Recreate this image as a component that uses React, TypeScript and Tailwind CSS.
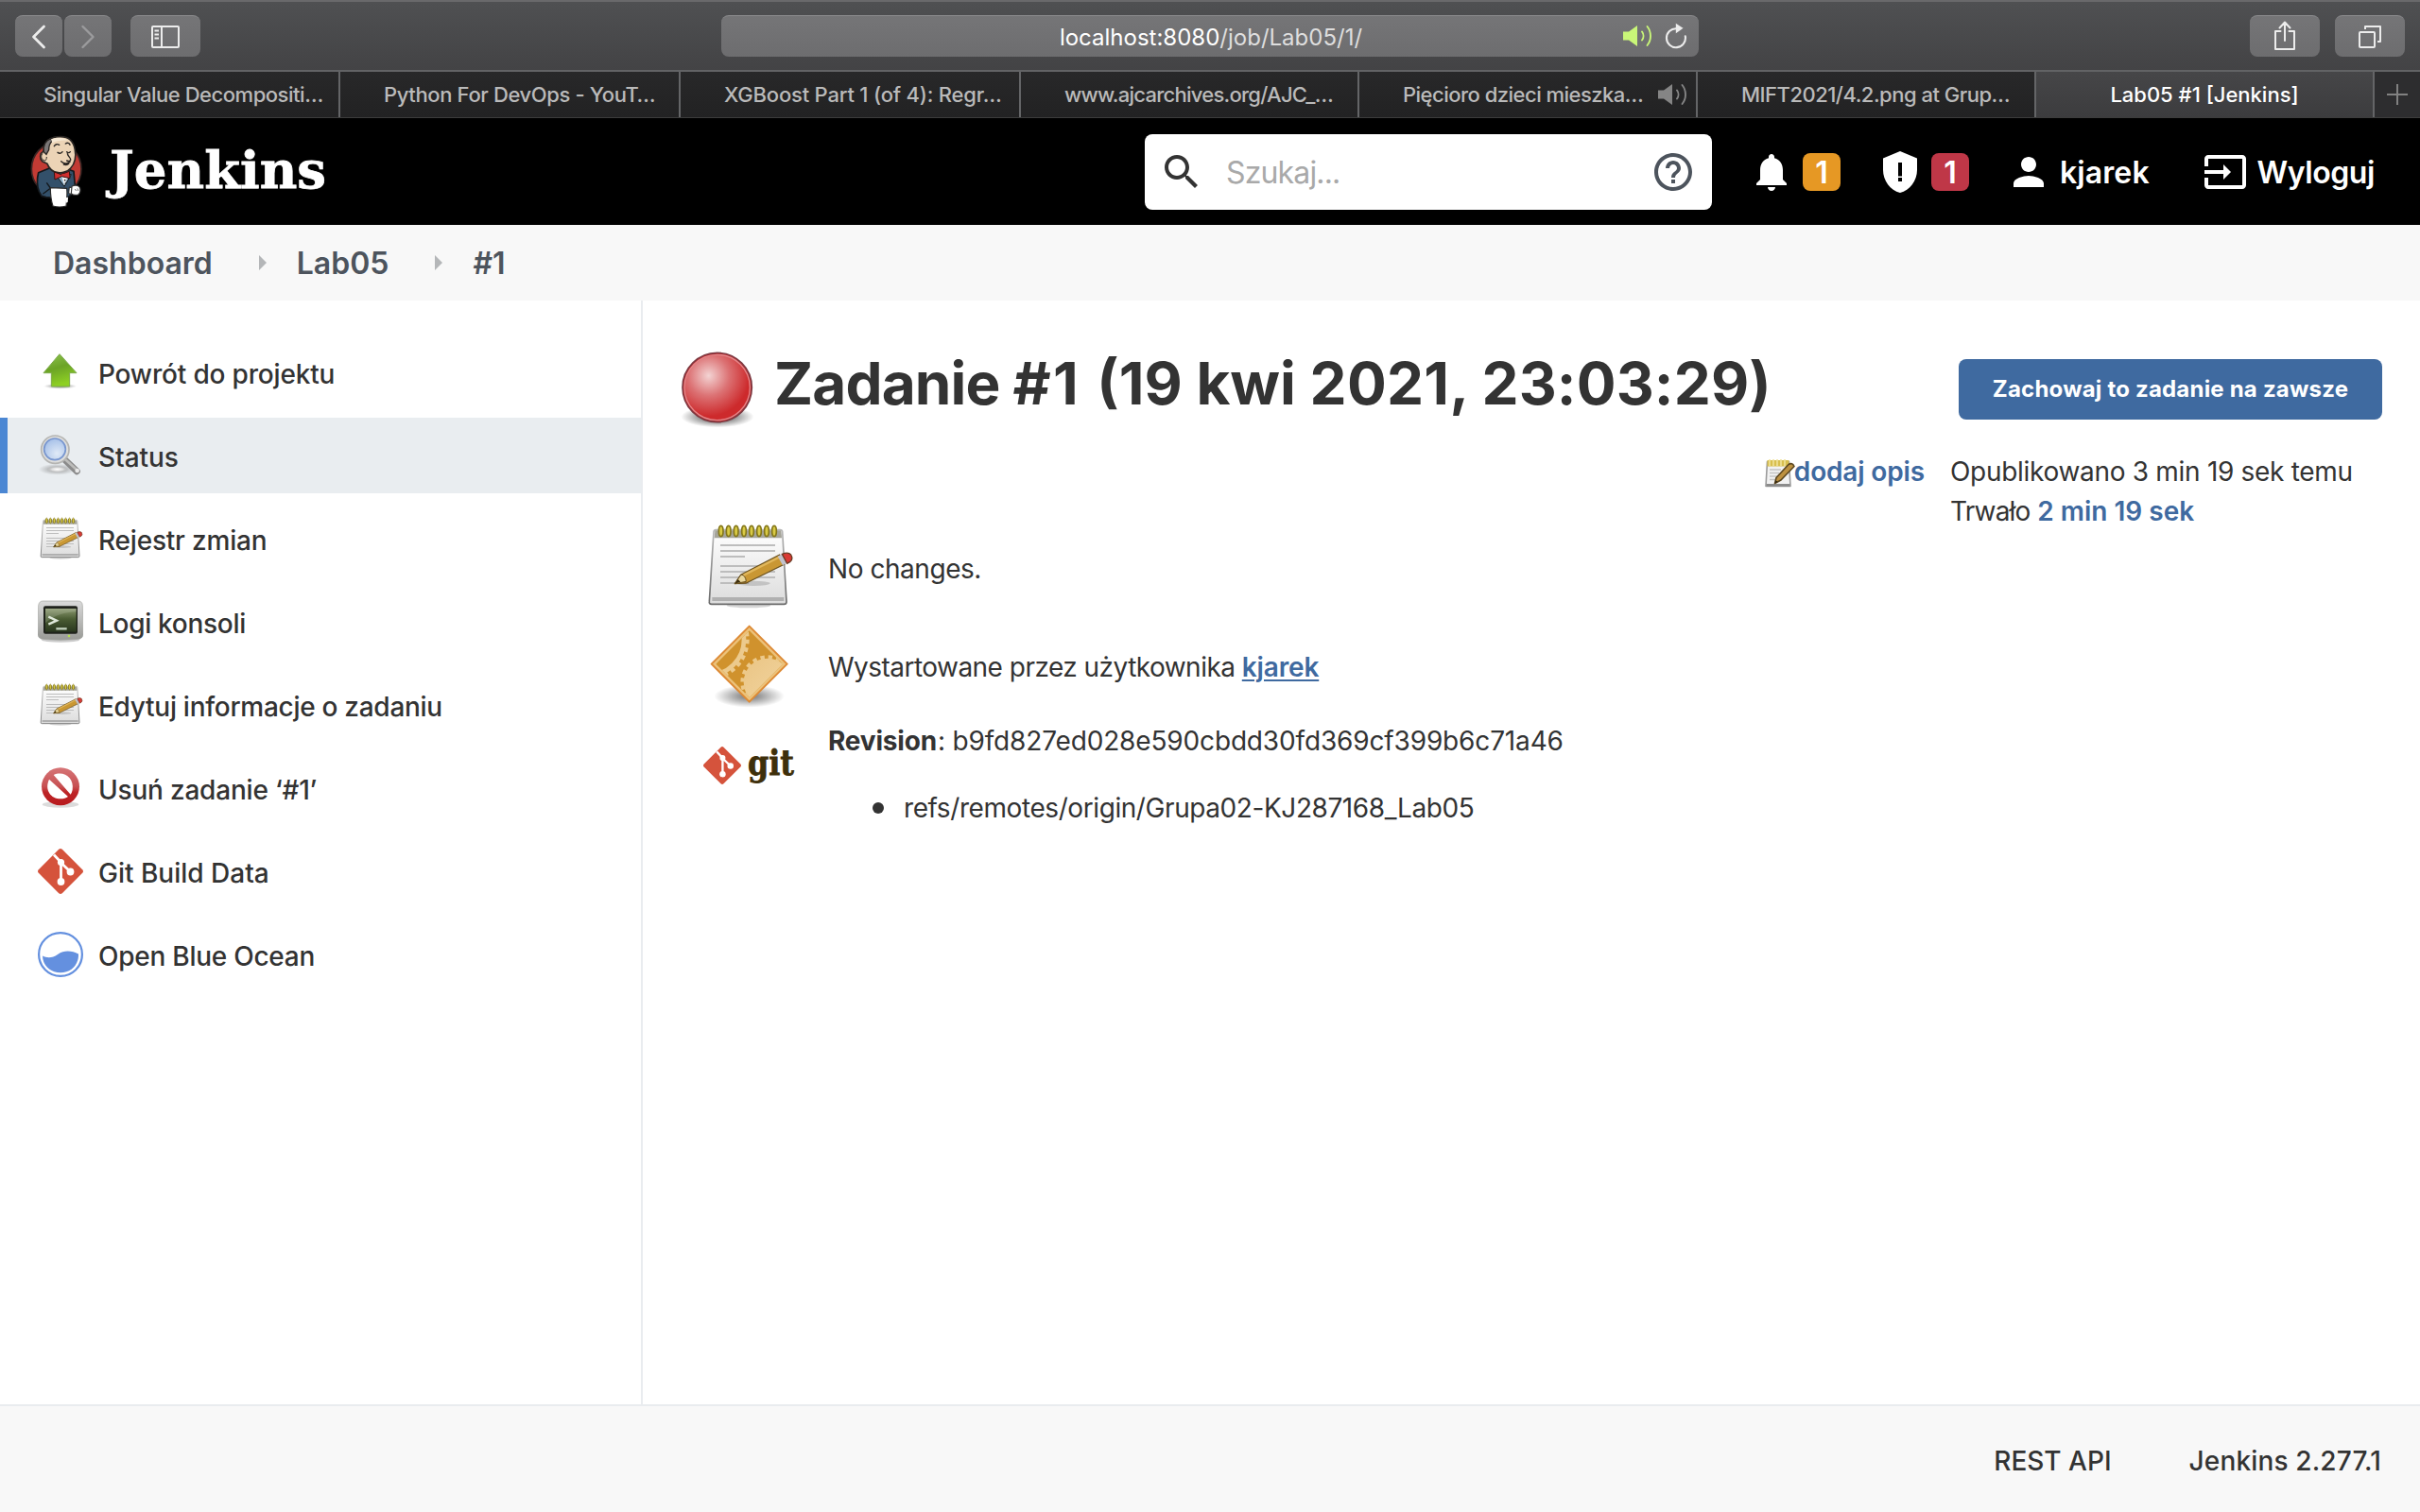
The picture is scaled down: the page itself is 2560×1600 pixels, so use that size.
import type { ReactNode } from 'react';

/* ---------- Browser chrome ---------- */

function Speaker({ className }: { className: string }) {
  return (
    <svg viewBox="0 0 34 26" className={className}>
      <path d="M1 8.500h6L16 2v22l-9-6.500H1z" fill="currentColor" />
      <path d="M21 8.500c2 2.600 2 6.400 0 9M26.500 3c4.700 5.800 4.700 14.200 0 20" fill="none" stroke="currentColor" strokeWidth="1.900" strokeLinecap="round" />
    </svg>
  );
}

const chromeButton =
  'flex h-[44px] shrink-0 items-center justify-center rounded-[8px] border-t border-[#8a8a8c] bg-linear-to-b from-[#757577] to-[#6d6d6f] text-[#ececec]';

function Toolbar() {
  return (
    <div className="flex h-[76px] shrink-0 items-center border-t-[2px] border-b-[2px] border-t-[#69696b] border-b-[#626365] bg-linear-to-b from-[#4f5052] to-[#434345] pl-4 pr-4">
      <div className={`${chromeButton} w-[50px]`}>
        <svg viewBox="0 0 50 44" className="h-[44px] w-[50px]">
          <path d="M30.500 11 19.500 22.000 30.500 33" fill="none" stroke="currentColor" strokeWidth="2.800" strokeLinecap="round" strokeLinejoin="round" />
        </svg>
      </div>
      <div className={`${chromeButton} ml-[2px] w-[50px]`}>
        <svg viewBox="0 0 50 44" className="h-[44px] w-[50px] text-[#9b9b9d]">
          <path d="M19.500 11 30.500 22 19.500 33" fill="none" stroke="currentColor" strokeWidth="2.400" strokeLinecap="round" strokeLinejoin="round" />
        </svg>
      </div>
      <div className={`${chromeButton} ml-[20px] w-[74px]`}>
        <svg viewBox="0 0 32 26" className="h-[26px] w-[32px]" fill="none" stroke="currentColor" strokeWidth="2">
          <rect x="2" y="2" width="28" height="22" rx="1" />
          <path d="M12 2v22M4.500 6.500H9M4.500 10.500H9M4.500 14.500H9" />
        </svg>
      </div>

      <div className={`${chromeButton} relative ml-[551px] w-[1034px]`}>
        <span className="ml-[2px] pt-[2px] text-[24px] leading-none text-[#dedede]">
          <span className="text-white">localhost:8080</span>/job/Lab05/1/
        </span>
        <div className="absolute right-[12px] top-0 flex h-[42px] items-center gap-[11px]">
          <Speaker className="h-[26px] w-[34px] text-[#c9f678]" />
          <svg viewBox="0 0 24 28" className="h-[28px] w-[24px]">
            <path d="M12.500 6.200a10 10 0 1 0 9.300 8.200" fill="none" stroke="currentColor" strokeWidth="2.100" strokeLinecap="round" />
            <path d="M11.800.8v10.400l7.800-5.400z" fill="currentColor" />
          </svg>
        </div>
      </div>

      <div className={`${chromeButton} ml-auto w-[74px]`}>
        <svg viewBox="0 0 26 34" className="mb-[2px] h-[34px] w-[26px]" fill="none" stroke="currentColor" strokeWidth="2">
          <path d="M8.500 12H3v19h20V12h-5.500M13 22V3M7.500 8.500 13 2.500l5.500 6" strokeLinejoin="round" strokeLinecap="round" />
        </svg>
      </div>
      <div className={`${chromeButton} ml-[16px] w-[74px]`}>
        <svg viewBox="0 0 28 28" className="h-[28px] w-[28px]" fill="none" stroke="currentColor" strokeWidth="2" strokeLinejoin="round">
          <rect x="3" y="9" width="16" height="16" rx="1" />
          <path d="M9 6V3h16v16h-3" />
        </svg>
      </div>
    </div>
  );
}

const tabs: { title: string; width: string; tracking: string; sound?: boolean }[] = [
  { title: 'Singular Value Decompositi…', width: 'w-[360px]', tracking: 'tracking-[-0.47px]' },
  { title: 'Python For DevOps - YouT…', width: 'w-[360px]', tracking: 'tracking-[-0.38px]' },
  { title: 'XGBoost Part 1 (of 4): Regr…', width: 'w-[360px]', tracking: 'tracking-[-0.2px]' },
  { title: 'www.ajcarchives.org/AJC_…', width: 'w-[358px]', tracking: 'tracking-[-0.75px]' },
  { title: 'Pięcioro dzieci mieszka…', width: 'w-[358px]', tracking: 'tracking-[-0.52px]', sound: true },
  { title: 'MIFT2021/4.2.png at Grup…', width: 'w-[358px]', tracking: 'tracking-[-0.5px]' },
];

function TabBar() {
  return (
    <div className="flex h-[49px] shrink-0 border-b border-[#3c3c3c] bg-linear-to-b from-[#282829] to-[#222223] text-[22px] font-medium leading-none text-[#bababa]">
      {tabs.map((tab) => (
        <div key={tab.title} className={`${tab.width} flex shrink-0 items-center border-r-[2px] border-[#646567] pl-[46px]`}>
          <span className={`${tab.tracking} whitespace-nowrap`}>{tab.title}</span>
          {tab.sound && <Speaker className="ml-auto mr-[7px] h-[26px] w-[34px] shrink-0 text-[#858585]" />}
        </div>
      ))}
      <div className="flex w-[358px] items-center justify-center border-r-[2px] border-[#646567] bg-linear-to-b from-[#464648] to-[#3c3c3e] text-white">
        Lab05 #1 [Jenkins]
      </div>
      <div className="flex flex-1 items-center justify-center bg-[#2d2d2f]">
        <svg viewBox="0 0 24 24" className="h-6 w-6">
          <path d="M12 1v22M1 12h22" stroke="#818181" strokeWidth="2" />
        </svg>
      </div>
    </div>
  );
}

/* ---------- Jenkins header ---------- */

function Butler() {
  return (
    <svg viewBox="0 0 270 300" className="mb-[3px] h-[100px] w-[90px] shrink-0">
      <ellipse cx="119" cy="146" rx="79" ry="83" fill="#c23b34" stroke="#3b2624" strokeWidth="5" />
      <path d="M62 158c-5 18-5 44 2 60l8 14 14 4 64 6 20-18 8-26-4-44-22-8-50-4z" fill="#33506a" stroke="#14181c" strokeWidth="5" strokeLinejoin="round" />
      <path d="M118 166l26 36 22-38z" fill="#88acc4" stroke="#14181c" strokeWidth="3" />
      <path d="M136 172l8 26 10-24z" fill="#f4f4f4" />
      <path d="M80 72c8-20 28-28 52-28 26 0 42 14 46 42 4 20 0 44-14 58-8 10-26 16-40 14-16-2-28-12-34-28l-16-8c-8-8-8-24 0-28 4-2 6-10 6-22z" fill="#ecd4b6" stroke="#2b2724" strokeWidth="5" strokeLinejoin="round" />
      <path d="M79 92c-2-20 6-36 22-42l4 8c-8 8-10 18-10 28l-8 14z" fill="#7b7878" stroke="#2b2724" strokeWidth="4" />
      <path d="M102 52c18-8 40-6 54 4-18-2-36 0-50 8z" fill="#f6e8d4" />
      <path d="M76 98c-8 4-6 20 6 22 4 0 6-6 6-12" fill="#ecd4b6" stroke="#2b2724" strokeWidth="3" />
      <path d="M112 74c4-6 10-8 16-4M148 66c6-4 12-2 14 4M123 94c5 4 11 4 15-2M152 92c4 4 8 4 11 0M154 98c2 10 12 14 10 20-2 4-8 4-12 2M134 122c8 8 20 10 28 2M142 132c6 2 12 2 16-2" fill="none" stroke="#2b2724" strokeWidth="4.200" strokeLinecap="round" />
      <path d="M112 156l22 8 4-4 6 0 16-6 2 22-18-4-8-2-22 10z" fill="#cf2f2f" stroke="#38120f" strokeWidth="3" strokeLinejoin="round" />
      <circle cx="146" cy="182" r="2.500" fill="#222" />
      <circle cx="148" cy="192" r="2.500" fill="#222" />
      <path d="M88 190l14 20M76 226l26-20" stroke="#14181c" strokeWidth="4" fill="none" />
      <path d="M160 204l14 4v20l-16-4z" fill="#fff" stroke="#222" strokeWidth="3" />
      <path d="M168 202c8-6 22-4 26 4 2 8 0 18-6 22-8 2-18 0-22-4z" fill="#fff" stroke="#333" strokeWidth="3.500" />
      <path d="M178 210l4 6M186 208l2 8" stroke="#333" strokeWidth="2" />
      <path d="M100 206l52 2c2 18 0 38-2 56-14 4-28 4-42 0-6-18-8-38-8-58z" fill="#fff" stroke="#2a2a2a" strokeWidth="3.500" />
      <path d="M148 238l8-2-1 16-6 2z" fill="#fff" />
    </svg>
  );
}

function Glyph({ d, className = '', evenOdd = false }: { d: string; className?: string; evenOdd?: boolean }) {
  return (
    <svg viewBox="0 0 24 24" className={`h-12 w-12 shrink-0 ${className}`} fill="currentColor">
      <path d={d} fillRule={evenOdd ? 'evenodd' : 'nonzero'} />
    </svg>
  );
}

function Header() {
  return (
    <header className="flex h-[113px] shrink-0 items-center bg-black pl-5 pr-[48px] text-[32px] font-semibold leading-none text-white">
      <Butler />
      <svg viewBox="0 0 240 72" className="h-[72px] w-[240px]">
        <text x="6" y="53" textLength="229" lengthAdjust="spacingAndGlyphs" fill="#fff" stroke="#fff" strokeWidth="0.800" fontFamily="DejaVu Serif, serif" fontWeight="700" fontSize="54">
          Jenkins
        </text>
      </svg>
      <div className="ml-[861px] flex h-[80px] w-[600px] shrink-0 items-center rounded-[8px] bg-white px-[15px] text-[#4d545d]">
        <Glyph className="text-[#333333]" d="M15.500 14h-.79l-.28-.27C15.410 12.590 16 11.110 16 9.500 16 5.910 13.090 3 9.500 3S3 5.910 3 9.500 5.910 16 9.500 16c1.610 0 3.090-.59 4.230-1.570l.27.28v.79l5 4.990L20.490 19l-4.990-5zm-6 0C7.010 14 5 11.990 5 9.500S7.010 5 9.500 5 14 7.010 14 9.500 11.990 14 9.500 14z" />
        <span className="ml-[23px] pt-[2px] font-normal tracking-[-0.85px] text-[#a9a9a9]">Szukaj...</span>
        <Glyph className="ml-auto mr-[2px]" d="M11 18h2v-2h-2v2zm1-16C6.480 2 2 6.480 2 12s4.480 10 10 10 10-4.480 10-10S17.520 2 12 2zm0 18c-4.410 0-8-3.590-8-8s3.590-8 8-8 8 3.590 8 8-3.590 8-8 8zm0-14c-2.210 0-4 1.790-4 4h2c0-1.100.9-2 2-2s2 .9 2 2c0 2-3 1.750-3 5h2c0-2.250 3-2.500 3-5 0-2.210-1.790-4-4-4z" />
      </div>
      <Glyph className="ml-[39px]" d="M12 22c1.100 0 2-.9 2-2h-4c0 1.100.89 2 2 2zm6-6v-5c0-3.070-1.640-5.640-4.500-6.320V4c0-.83-.67-1.500-1.500-1.500s-1.500.67-1.500 1.500v.68C7.630 5.360 6 7.920 6 11v5l-2 2v1h16v-1l-2-2z" />
      <span className="ml-[9px] flex h-10 w-10 items-center justify-center rounded-[8px] bg-[#e69824] pt-[2px]">1</span>
      <Glyph className="ml-[39px]" evenOdd d="M12 1 3 4.800V11c0 5.550 3.840 10.740 9 12 5.160-1.260 9-6.450 9-12V4.800zM11 7h2v7.200h-2zM11 15h2v2h-2z" />
      <span className="ml-[9px] flex h-10 w-10 items-center justify-center rounded-[8px] bg-[#bf3747] pt-[2px]">1</span>
      <Glyph className="ml-[39px]" d="M12 12c2.210 0 4-1.790 4-4s-1.790-4-4-4-4 1.790-4 4 1.790 4 4 4zm0 2c-2.670 0-8 1.340-8 4v2h16v-2c0-2.660-5.330-4-8-4z" />
      <span className="ml-[9px] pt-[2px] tracking-[0.1px]">kjarek</span>
      <Glyph className="ml-auto" d="M21 3.010H3c-1.100 0-2 .9-2 2V9h2V4.990h18v14.030H3V15H1v4.010c0 1.100.9 1.980 2 1.980h18c1.100 0 2-.88 2-1.980v-14c0-1.110-.9-2-2-2zM11 16l4-4-4-4v3H1v2h10v3z" />
      <span className="ml-[9px] pt-[2px] tracking-[-0.4px]">Wyloguj</span>
    </header>
  );
}

function Crumbs() {
  const arrow = (
    <svg viewBox="0 0 8 16" className="h-4 w-2">
      <path d="M0 0l8 8-8 8z" fill="#b4b6b8" />
    </svg>
  );
  return (
    <nav className="flex h-[80px] shrink-0 items-center bg-[#f8f8f8] pl-[56px] text-[32px] font-semibold leading-none text-[#4d545d]">
      <span className="pt-[2px]">Dashboard</span>
      <span className="ml-[49px]">{arrow}</span>
      <span className="ml-[32px] pt-[2px]">Lab05</span>
      <span className="ml-[49px]">{arrow}</span>
      <span className="ml-[32px] pt-[2px]">#1</span>
    </nav>
  );
}

/* ---------- Side panel ---------- */

function UpArrow() {
  return (
    <svg viewBox="30 0 144 144" className="h-12 w-12">
      <defs>
        <linearGradient id="up" x1="0" y1="0" x2="0.300" y2="1">
          <stop offset="0" stopColor="#8fc452" />
          <stop offset="0.5" stopColor="#6ba326" />
          <stop offset="1" stopColor="#8ed024" />
        </linearGradient>
        <radialGradient id="upsh">
          <stop offset="0" stopColor="#000" stopOpacity="0.5" />
          <stop offset="1" stopColor="#000" stopOpacity="0" />
        </radialGradient>
      </defs>
      <ellipse cx="101" cy="116" rx="52" ry="9" fill="url(#upsh)" />
      <path d="M99 14l54 60h-22v43H73V74H48z" fill="url(#up)" stroke="#7dab4b" strokeWidth="3" strokeLinejoin="round" />
    </svg>
  );
}

function Lens() {
  return (
    <svg viewBox="30 264 144 144" className="h-12 w-12">
      <defs>
        <radialGradient id="glass" cx="0.6" cy="0.7" r="0.8">
          <stop offset="0" stopColor="#e0eaf7" />
          <stop offset="1" stopColor="#9fbbe6" />
        </radialGradient>
        <radialGradient id="lsh">
          <stop offset="0" stopColor="#fff" />
          <stop offset="0.3" stopColor="#ddd" />
          <stop offset="0.6" stopColor="#777" stopOpacity="0.3" />
          <stop offset="1" stopColor="#777" stopOpacity="0" />
        </radialGradient>
      </defs>
      <ellipse cx="92" cy="380" rx="60" ry="18" fill="url(#lsh)" />
      <path d="M114 348l40 38" stroke="#8b8b8b" strokeWidth="21" strokeLinecap="round" />
      <path d="M114 346l40 36" stroke="#bdbdbb" strokeWidth="8" />
      <circle cx="155" cy="384" r="7" fill="#e9e9e9" />
      <circle cx="85" cy="317" r="44" fill="#dededc" stroke="#b5b5b3" strokeWidth="5" />
      <circle cx="84" cy="316" r="34" fill="url(#glass)" stroke="#7896cf" strokeWidth="5" />
    </svg>
  );
}

function Notepad({ className }: { className: string }) {
  return (
    <svg viewBox="102 576 288 288" className={className}>
      <defs>
        <linearGradient id="paper" x1="0" y1="0" x2="0" y2="1">
          <stop offset="0" stopColor="#ffffff" />
          <stop offset="1" stopColor="#dcdcdc" />
        </linearGradient>
        <linearGradient id="pedge" x1="0" y1="0" x2="0" y2="1">
          <stop offset="0" stopColor="#b9b9b9" />
          <stop offset="1" stopColor="#6a6a6a" />
        </linearGradient>
      </defs>
      <ellipse cx="246" cy="842" rx="70" ry="8" fill="#000" opacity="0.16" />
      <path d="M142 602h204q6 0 7 6l13 222q0 8-8 8H128q-8 0-7-8l14-222q1-6 7-6z" fill="url(#paper)" stroke="url(#pedge)" strokeWidth="5" />
      <path d="M139 604h210l2 24H137z" fill="#a5a49a" />
      <path d="M130 816h228v12H130z" fill="#b0b0b0" />
      {[158, 182, 206, 231, 255, 279, 303, 327].map((x) => (
        <ellipse key={x} cx={x} cy="606" rx="7" ry="17" fill="#d9cb45" stroke="#84771a" strokeWidth="5" />
      ))}
      <path d="M156 651h174M156 669h174M156 687h78M156 717h174M156 735h174M156 753h174M156 771h90" stroke="#bdbdbd" strokeWidth="6" />
      <ellipse cx="262" cy="772" rx="52" ry="8" fill="#000" opacity="0.15" />
      <path d="M202 773l20-29 122-63 16 30-122 60z" fill="#c99733" stroke="#6b5220" strokeWidth="4" strokeLinejoin="round" />
      <path d="M226 748l122-62" stroke="#e0b75c" strokeWidth="7" />
      <path d="M202 773l20-29q14 2 16 22z" fill="#ead79c" stroke="#6b5220" strokeWidth="3" />
      <path d="M202 773l10-14 8 8z" fill="#3a2c0d" />
      <path d="M338 686l14-7 16 28-14 8z" fill="#c2c2cc" />
      <path d="M352 679q20-8 28 2 8 14-2 22l-10 6z" fill="#d93a35" stroke="#6a3a22" strokeWidth="4" />
    </svg>
  );
}

function SmallNotepad() {
  return (
    <svg viewBox="0 0 32 32" className="mt-[6px] h-8 w-8">
      <path d="M2.500 3.500h23l1.500 26H1z" fill="#f2f2f2" stroke="#9b9b9b" strokeWidth="1.600" strokeLinejoin="round" />
      <path d="M1.500 27h25v3h-25z" fill="#8c8c8c" />
      <path d="M5 12h12M5 15.500h10M5 19h8M5 22.500h6" stroke="#c4c4c4" strokeWidth="1.400" />
      <path d="M2.500 2h23v6.500h-23z" fill="#d8bf4e" />
      <path d="M5 1v7M9 1v7M13 1v7M17 1v7M21 1v7" stroke="#f1e39b" strokeWidth="1.600" />
      <path d="M10.500 26.500l1.500-6L25 6.500q4-2.500 6 2L17 23z" fill="#bd9140" stroke="#5c471f" strokeWidth="1.600" strokeLinejoin="round" />
      <path d="M10.500 26.500l1-3.500 2 2z" fill="#33270e" />
    </svg>
  );
}

function Terminal() {
  return (
    <svg viewBox="30 792 144 144" className="h-12 w-12">
      <defs>
        <linearGradient id="case" x1="0" y1="0" x2="0" y2="1">
          <stop offset="0" stopColor="#dadada" />
          <stop offset="1" stopColor="#999a96" />
        </linearGradient>
        <linearGradient id="crt" x1="0" y1="0" x2="0" y2="1">
          <stop offset="0" stopColor="#8c9a70" />
          <stop offset="0.45" stopColor="#4a5c33" />
          <stop offset="1" stopColor="#29371e" />
        </linearGradient>
      </defs>
      <ellipse cx="102" cy="922" rx="60" ry="7" fill="#000" opacity="0.2" />
      <path d="M46 798h112q13 0 14 14l2 92q0 10-12 15-60 6-120 0-12-5-12-15l2-92q2-14 14-14z" fill="url(#case)" stroke="#a5a6a2" strokeWidth="2" />
      <rect x="48" y="814" width="108" height="88" rx="6" fill="#1f221b" />
      <rect x="54" y="822" width="98" height="74" fill="url(#crt)" />
      <path d="M54 868c30-26 62-34 98-36v-10H54z" fill="#fff" opacity="0.14" />
      <path d="M64 848l26 12-26 12" fill="none" stroke="#dfe8da" strokeWidth="7" />
      <path d="M88 886h34" stroke="#c2d2bd" strokeWidth="7" />
      <circle cx="129" cy="909" r="4" fill="#b6e052" />
    </svg>
  );
}

function Forbidden() {
  return (
    <svg viewBox="0 0 144 144" className="h-12 w-12">
      <defs>
        <linearGradient id="no" x1="0" y1="0" x2="0" y2="1">
          <stop offset="0" stopColor="#d67577" />
          <stop offset="0.5" stopColor="#c75052" />
          <stop offset="0.65" stopColor="#bd2527" />
          <stop offset="1" stopColor="#b81a1d" />
        </linearGradient>
      </defs>
      <ellipse cx="72" cy="124" rx="58" ry="10" fill="#000" opacity="0.14" />
      <circle cx="72" cy="67" r="60" fill="url(#no)" />
      <path d="M50 30c32-15 66 9 60 47-1 6-3 11-6 15zM36 44c-16 34 6 62 36 62 9 0 18-3 24-7z" fill="#fff" />
    </svg>
  );
}

function GitMark({ className }: { className: string }) {
  return (
    <svg viewBox="0 0 48 48" className={className}>
      <path d="M22.200.8q1.800-1.600 3.600 0L47.200 22.200q1.600 1.800 0 3.600L25.800 47.200q-1.800 1.600-3.600 0L.8 25.800q-1.600-1.800 0-3.600z" fill="#d5533c" />
      <path d="M17 6.500l7.500 8v21M24.500 15l9.500 9" fill="none" stroke="#fff" strokeWidth="2.800" />
      <circle cx="24.500" cy="14.500" r="3.600" fill="#fff" />
      <circle cx="24.500" cy="35" r="3.900" fill="#fff" />
      <circle cx="34.500" cy="24.500" r="3.900" fill="#fff" />
    </svg>
  );
}

function Ocean() {
  return (
    <svg viewBox="0 0 48 48" className="h-12 w-12">
      <circle cx="24" cy="24" r="22.900" fill="#fff" stroke="#6490df" strokeWidth="2.200" />
      <path d="M5 25.500c5 2.500 10.500 2.300 16-1.500 8-5.500 15.500-3.500 22-.5C43.500 35 35 43.300 24 43.300S5 35 5 25.500z" fill="#6490df" />
    </svg>
  );
}

const tasks: { label: string; tracking: string; icon: ReactNode; active?: boolean }[] = [
  { label: 'Powrót do projektu', tracking: 'tracking-[-0.18px]', icon: <UpArrow /> },
  { label: 'Status', tracking: 'tracking-[-0.05px]', icon: <Lens />, active: true },
  { label: 'Rejestr zmian', tracking: 'tracking-[-0.2px]', icon: <Notepad className="h-12 w-12" /> },
  { label: 'Logi konsoli', tracking: 'tracking-[-0.3px]', icon: <Terminal /> },
  { label: 'Edytuj informacje o zadaniu', tracking: 'tracking-[-0.28px]', icon: <Notepad className="h-12 w-12" /> },
  { label: 'Usuń zadanie ‘#1’', tracking: 'tracking-[-0.2px]', icon: <Forbidden /> },
  { label: 'Git Build Data', tracking: 'tracking-normal', icon: <GitMark className="h-12 w-12" /> },
  { label: 'Open Blue Ocean', tracking: 'tracking-[-0.25px]', icon: <Ocean /> },
];

function SidePanel() {
  return (
    <aside className="flex w-[680px] shrink-0 flex-col gap-2 border-r-[2px] border-[#e9ecef] pt-[36px]">
      {tasks.map((task) => (
        <div
          key={task.label}
          className={`flex h-[80px] items-center border-l-[8px] pl-8 text-[28px] font-medium leading-none ${
            task.active ? 'border-[#4b87d3] bg-[#e9edf0]' : 'border-transparent'
          }`}
        >
          <span className="h-12 w-12">{task.icon}</span>
          <span className={`${task.tracking} ml-[16px] pt-[3px]`}>{task.label}</span>
        </div>
      ))}
    </aside>
  );
}

/* ---------- Build page ---------- */

function RedBall() {
  return (
    <svg viewBox="24 30 246 252" className="h-[84px] w-[82px] shrink-0">
      <defs>
        <radialGradient id="ball" cx="0.37" cy="0.32" r="0.62">
          <stop offset="0" stopColor="#f3d3d3" />
          <stop offset="0.5" stopColor="#dc7274" />
          <stop offset="1" stopColor="#cd2a2c" />
        </radialGradient>
        <radialGradient id="ballsh">
          <stop offset="0.5" stopColor="#000" stopOpacity="0.4" />
          <stop offset="1" stopColor="#000" stopOpacity="0" />
        </radialGradient>
      </defs>
      <ellipse cx="147" cy="243" rx="116" ry="34" fill="url(#ballsh)" />
      <circle cx="146" cy="150" r="110" fill="#cd2a2c" stroke="#7d3a42" strokeWidth="5" />
      <circle cx="146" cy="150" r="104" fill="url(#ball)" stroke="#e2888b" strokeWidth="4" />
    </svg>
  );
}

function OrangeDiamond() {
  return (
    <svg viewBox="102 888 288 288" className="h-24 w-24">
      <defs>
        <linearGradient id="gear" x1="0" y1="0" x2="1" y2="1">
          <stop offset="0" stopColor="#eac584" />
          <stop offset="1" stopColor="#f3d7a5" />
        </linearGradient>
        <radialGradient id="diash">
          <stop offset="0.2" stopColor="#000" stopOpacity="0.45" />
          <stop offset="1" stopColor="#000" stopOpacity="0" />
        </radialGradient>
        <clipPath id="diaclip">
          <path d="M248 922l106 106-106 106-106-106z" />
        </clipPath>
      </defs>
      <ellipse cx="248" cy="1130" rx="112" ry="36" fill="url(#diash)" />
      <path d="M248 908l120 120-120 120-120-120z" fill="#ecc27a" stroke="#dd8a35" strokeWidth="6" strokeLinejoin="round" />
      <g clipPath="url(#diaclip)">
        <rect x="128" y="908" width="240" height="240" fill="#d0922d" />
        <circle cx="118" cy="950" r="113" fill="none" stroke="#ecca8d" strokeWidth="14" />
        <circle cx="118" cy="950" r="124" fill="none" stroke="#ecca8d" strokeWidth="12" strokeDasharray="14 12" />
        <circle cx="306" cy="1086" r="76" fill="url(#gear)" />
        <circle cx="306" cy="1086" r="79" fill="none" stroke="#ecc98a" strokeWidth="14" strokeDasharray="13 11.800" />
      </g>
    </svg>
  );
}

function Main() {
  return (
    <main className="flex min-w-0 flex-1 flex-col pl-[38px] pr-[40px] text-[28px] leading-[42px]">
      <div className="mt-[52px] flex h-[84px] items-start">
        <RedBall />
        <h1 className="ml-[19px] mt-[-2px] whitespace-nowrap text-[62px] font-bold leading-[76px]">
          <span className="tracking-[-0.85px]">Zadanie </span>
          <span className="tracking-[2.400px]">#1 </span>
          (19 kwi <span className="tracking-[0.300px]">2021, </span>
          <span className="tracking-[0.150px]">23:03:29)</span>
        </h1>
        <button className="ml-auto mt-[10px] flex h-[64px] w-[448px] items-center justify-center rounded-[8px] bg-[#3f6aa0] text-[24px] font-bold leading-none tracking-[0.2px] text-white">
          Zachowaj to zadanie na zawsze
        </button>
      </div>

      <div className="mt-[23px] flex h-[84px] justify-end">
        <a className="flex h-[42px] items-center font-semibold text-[#3f6aa0]">
          <SmallNotepad />
          <span className="ml-[-1px] pt-[1px] tracking-[-0.15px]">dodaj opis</span>
        </a>
        <div className="ml-[27px] w-[457px] pt-[1px]">
          <p className="tracking-[-0.3px]">Opublikowano 3 min 19 sek temu</p>
          <p>
            <span className="tracking-[-0.85px]">Trwało</span> <a className="font-semibold text-[#3f6aa0]">2 min 19 sek</a>
          </p>
        </div>
      </div>

      <div className="ml-[26px] mt-[-9px] grid grid-cols-[96px_1fr] gap-x-[36px] gap-y-2">
        <Notepad className="h-24 w-24" />
        <p className="self-center pt-[4px] tracking-[-0.45px]">No changes.</p>

        <OrangeDiamond />
        <p className="self-center pt-[4px] tracking-[-0.53px]">
          Wystartowane przez użytkownika{' '}
          <a className="font-semibold tracking-[-0.15px] text-[#3f6aa0] underline decoration-2 underline-offset-[3px]">kjarek</a>
        </p>

        <div className="flex h-[120px] items-start pt-[30px]">
          <GitMark className="h-10 w-10 shrink-0" />
          <svg viewBox="0 0 64 44" className="h-[44px] w-[64px] shrink-0">
            <text x="7" y="30" textLength="49" lengthAdjust="spacingAndGlyphs" fontFamily="DejaVu Serif, serif" fontWeight="700" fontSize="37" fill="#3e2f0a" stroke="#3e2f0a" strokeWidth="0.800">
              git
            </text>
          </svg>
        </div>
        <div className="pt-[3px]">
          <p>
            <b className="tracking-[-0.2px]">Revision</b>
            <span className="ml-[1px] tracking-[-0.15px]">: b9fd827ed028e590cbdd30fd369cf399b6c71a46</span>
          </p>
          <p className="mt-[28px] flex items-center pl-[47px]">
            <span className="h-3 w-3 rounded-full bg-[#333333]" />
            <span className="ml-[21px] pt-px tracking-[-0.42px]">refs/remotes/origin/Grupa02-KJ287168_Lab05</span>
          </p>
        </div>
      </div>
    </main>
  );
}

export default function App() {
  return (
    <div className="flex h-[1600px] w-[2560px] flex-col overflow-hidden bg-white font-['Inter',sans-serif] text-[#333333]">
      <Toolbar />
      <TabBar />
      <Header />
      <Crumbs />
      <div className="flex min-h-0 flex-1">
        <SidePanel />
        <Main />
      </div>
      <footer className="flex h-[114px] shrink-0 items-center justify-end border-t-[2px] border-[#e9ecef] bg-[#f8f8f8] pr-[41px] pt-[3px] text-[28px] font-medium leading-none">
        <span>REST API</span>
        <span className="ml-[82px] tracking-[0.15px]">Jenkins 2.277.1</span>
      </footer>
    </div>
  );
}
